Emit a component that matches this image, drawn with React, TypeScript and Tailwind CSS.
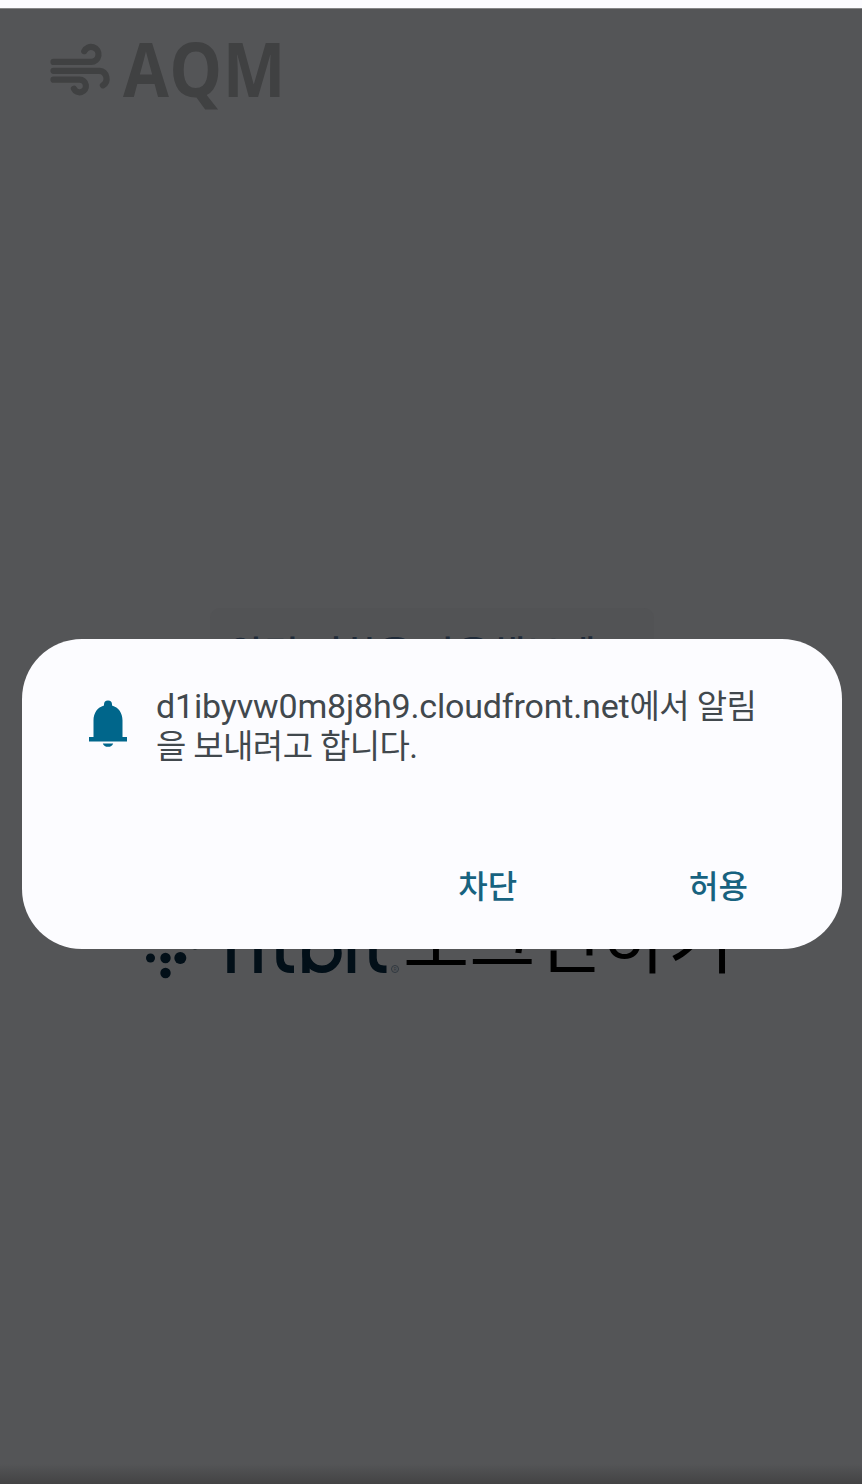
function WindIcon() {
  return (
    <svg viewBox="0 0 60 52" className="mt-[43px] ml-[50px] h-[52px] w-[60px] shrink-0 overflow-visible" fill="none" stroke="#404142" strokeWidth="6.200" strokeLinecap="round" strokeLinejoin="round">
      <path d="M3.5 18.900H41a7.500 7.500 0 1 0-6.700-10.800" />
      <path d="M3.5 27.800H49.500a7.900 7.900 0 0 1 3.400 14.500" />
      <path d="M3.5 36.700H29.500a6.300 6.300 0 1 1-5.600 9" />
    </svg>
  );
}

function BellIcon() {
  return (
    <svg viewBox="0 0 40 50" className="mt-[61px] h-[50px] w-[40px] shrink-0" fill="#00668b">
      <path d="M5.500 38V20.500C5.500 13 9.500 7.500 16 5.600V4.500a4 4 0 0 1 8 0V5.600C30.500 7.500 34.500 13 34.500 20.500V37H39V41.500H1V37H5.500Z" />
      <path d="M14.800 43.500H25.200A5.500 5 0 0 1 14.800 43.500Z" />
    </svg>
  );
}

function FitbitLogo() {
  return (
    <svg viewBox="0 0 260 90" className="h-[90px] w-[260px] shrink-0" fill="#020f18">
      <circle cx="5.500" cy="68" r="4.500" />
      <circle cx="20.500" cy="68" r="5.200" />
      <circle cx="35.300" cy="68" r="6" />
      <circle cx="20.500" cy="83" r="5.200" />
      <circle cx="50" cy="53" r="6.500" />
      <g fill="none" stroke="#020f18" strokeWidth="7.500">
        <path d="M86 83V38q0-13 13-13" />
        <path d="M113 83V43" />
        <path d="M135 28V68q0 11.200 11 11.200H149" />
        <path d="M161 83V22" />
        <circle cx="177" cy="63.300" r="16" />
        <path d="M206.500 83V43" />
        <path d="M228 28V68q0 11.200 11 11.200H241.500" />
      </g>
    </svg>
  );
}

export default function App() {
  return (
    <div className="relative flex h-[1484px] w-full flex-col overflow-hidden bg-[#545557] font-['Roboto','Noto_Sans_CJK_KR',sans-serif]">
      <div className="h-[9px] shrink-0 border-b border-[#858587] bg-[#fcfcff]" />
      <header className="-mt-[9px] flex h-[140px] shrink-0">
        <WindIcon />
        <h1 className="ml-[13px] origin-left scale-x-[0.875] pt-[14px] font-['Open_Sans',sans-serif] text-[76px] leading-[108px] font-bold tracking-[0.5px] text-[#404142]">AQM</h1>
      </header>
      <main className="flex flex-1 flex-col">
        <section className="mt-[468px] ml-[210px] h-[200px] w-[444px] rounded-[10px] bg-[#525355] pt-[14px] pl-[19px] font-['Noto_Sans_CJK_KR',sans-serif] text-[38px] leading-[60px] font-medium whitespace-nowrap text-[#202b39]">
          알림 기한을 사용해보세요
        </section>
        <section className="mt-[82px] ml-[145px] flex h-[100px]">
          <FitbitLogo />
          <span className="-ml-[14px] mt-[75px] flex h-[8px] w-[8px] items-center justify-center rounded-full border border-[#303840] text-[5px] leading-none text-[#303840]">R</span>
          <span className="-mt-[7px] ml-[4px] font-['Noto_Sans_CJK_KR',sans-serif] text-[72px] leading-[106px] whitespace-nowrap text-black">로그인하기</span>
        </section>
      </main>
      <div className="h-[20px] shrink-0 bg-linear-to-b from-[#545557] to-[#434344]" />

      <div role="dialog" className="absolute top-[639px] left-[22px] flex h-[310px] w-[820px] flex-col rounded-[60px] bg-[#fcfcff]">
        <div className="flex h-[210px] pl-[66px]">
          <BellIcon />
          <p className="mt-[47px] ml-[28px] text-[33px] leading-[40px] tracking-[-0.6px] whitespace-nowrap text-[#41484d]">
            <span className="text-[34px] tracking-[-0.16px]">d1ibyvw0m8j8h9.cloudfront.net</span>에서 알림<br />을 보내려고 합니다.
          </p>
        </div>
        <div className="flex justify-end gap-[172px] pt-[15px] pr-[94px] text-[32px] leading-[46px] font-medium text-[#17627f]">
          <button>차단</button>
          <button>허용</button>
        </div>
      </div>
    </div>
  );
}
